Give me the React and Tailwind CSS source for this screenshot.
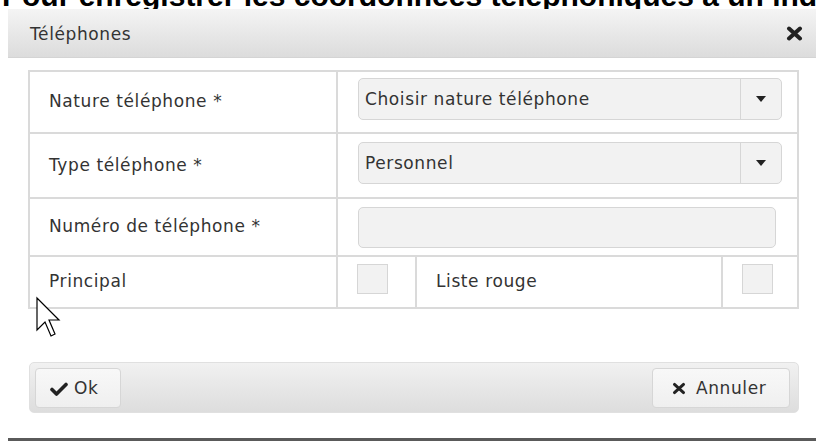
import React from "react";

const label = "font-['DejaVu_Sans',sans-serif] text-[17px] tracking-[0.6px] text-[#333]";

const CloseIcon = ({ w = 17, h = 15, sw = 4 }) => (
  <svg width={w} height={h} viewBox="0 0 17 15">
    <path d="M3 2.5 L14 12.5 M14 2.5 L3 12.5" stroke="#222" strokeWidth={sw} strokeLinecap="round" />
  </svg>
);

const CheckIcon = () => (
  <svg width="18" height="14" viewBox="0 0 18 14">
    <path d="M2 7.5 L6.5 12 L16 2.5" fill="none" stroke="#222" strokeWidth="3.6" strokeLinecap="round" strokeLinejoin="round" />
  </svg>
);

const Select = ({ value }) => (
  <div className="flex h-[42px] items-stretch rounded-[5px] border border-[#d6d6d6] bg-[#f2f2f2]">
    <div className={`flex flex-1 items-center pl-[6px] pt-[2px] ${label}`}>{value}</div>
    <div className="flex w-[41px] items-center justify-center border-l border-[#d6d6d6]">
      <svg width="10" height="6" viewBox="0 0 10 6">
        <path d="M0 0 L10 0 L5 6 Z" fill="#222" />
      </svg>
    </div>
  </div>
);

const Checkbox = () => (
  <div className="h-[30px] w-[31px] border border-[#d6d6d6] bg-[#f2f2f2]" />
);

const Row = ({ name, height, first, children }) => (
  <div className={`flex ${height} ${first ? "" : "border-t-2 border-[#dadada]"}`}>
    <div className={`flex w-[306px] items-center pl-[19px] ${label}`}>{name}</div>
    {children}
  </div>
);

export default function App() {
  return (
    <div className="relative h-[441px] w-[816px] overflow-hidden bg-white">
      {/* page heading behind the dialog */}
      <div className="h-[9px] overflow-hidden">
        <p className="-mt-[19px] whitespace-nowrap pl-[2px] font-['Liberation_Sans',Arial,sans-serif] text-[30px] font-bold leading-[30px] text-black">
          Pour enregistrer les coordonnées téléphoniques à un individu
        </p>
      </div>

      <div className="ml-[8px]">
        <div className="flex h-[49px] items-center justify-between border-b border-[#d4d4d4] bg-linear-to-b from-[#f4f4f4] to-[#dcdcdc] pl-[22px] pr-[13px]">
          <span className={`pt-[4px] ${label}`}>Téléphones</span>
          <CloseIcon />
        </div>

        <div className="pl-[20px] pr-[17px] pt-[12px]">
          <div className="border-2 border-[#dadada]">
            <Row name="Nature téléphone *" height="h-[60px]" first>
              <div className="flex-1 border-l-2 border-[#dadada] pl-[20px] pr-[15px] pt-[6px]">
                <Select value="Choisir nature téléphone" />
              </div>
            </Row>
            <Row name="Type téléphone *" height="h-[65px]">
              <div className="flex-1 border-l-2 border-[#dadada] pl-[20px] pr-[15px] pt-[8px]">
                <Select value="Personnel" />
              </div>
            </Row>
            <Row name="Numéro de téléphone *" height="h-[58px]">
              <div className="flex-1 border-l-2 border-[#dadada] pl-[20px] pr-[21px] pt-[8px]">
                <div className="h-[41px] rounded-[5px] border border-[#d6d6d6] bg-[#f2f2f2]" />
              </div>
            </Row>
            <Row name="Principal" height="h-[52px]">
              <div className="w-[79px] border-l-2 border-[#dadada] pl-[19px] pt-[7px]">
                <Checkbox />
              </div>
              <div className={`flex w-[306px] items-center border-l-2 border-[#dadada] pl-[19px] ${label}`}>
                Liste rouge
              </div>
              <div className="flex-1 border-l-2 border-[#dadada] pl-[19px] pt-[7px]">
                <Checkbox />
              </div>
            </Row>
          </div>
        </div>

        <div className="ml-[21px] mr-[17px] mt-[53px] flex h-[51px] items-center justify-between rounded-[5px] border border-[#e0e0e0] bg-linear-to-b from-[#f1f1f1] to-[#dddddd] px-[5px]">
          <button className="flex h-[40px] w-[86px] items-center gap-[6px] rounded-[4px] border border-[#d6d6d6] bg-linear-to-b from-[#f8f8f8] to-[#efefef] pl-[14px] pt-[2px]">
            <CheckIcon />
            <span className={label}>Ok</span>
          </button>
          <button className="mr-[3px] flex h-[40px] w-[138px] items-center gap-[10px] rounded-[4px] border border-[#d6d6d6] bg-linear-to-b from-[#f8f8f8] to-[#efefef] pl-[19px] pt-[2px]">
            <CloseIcon w={14} h={13} sw={3.6} />
            <span className={label}>Annuler</span>
          </button>
        </div>

        <div className="mt-[25px] h-[3px] bg-[#5a5a5a]" />
      </div>

      {/* mouse pointer */}
      <svg className="absolute left-[35px] top-[296px]" width="26" height="44" viewBox="0 0 13 22">
        <path d="M1 1 L1 17 L5 13 L8 20 L10 19 L7 12 L12 12 Z" fill="#fff" stroke="#000" strokeWidth="0.6" strokeLinejoin="miter" />
      </svg>
    </div>
  );
}
